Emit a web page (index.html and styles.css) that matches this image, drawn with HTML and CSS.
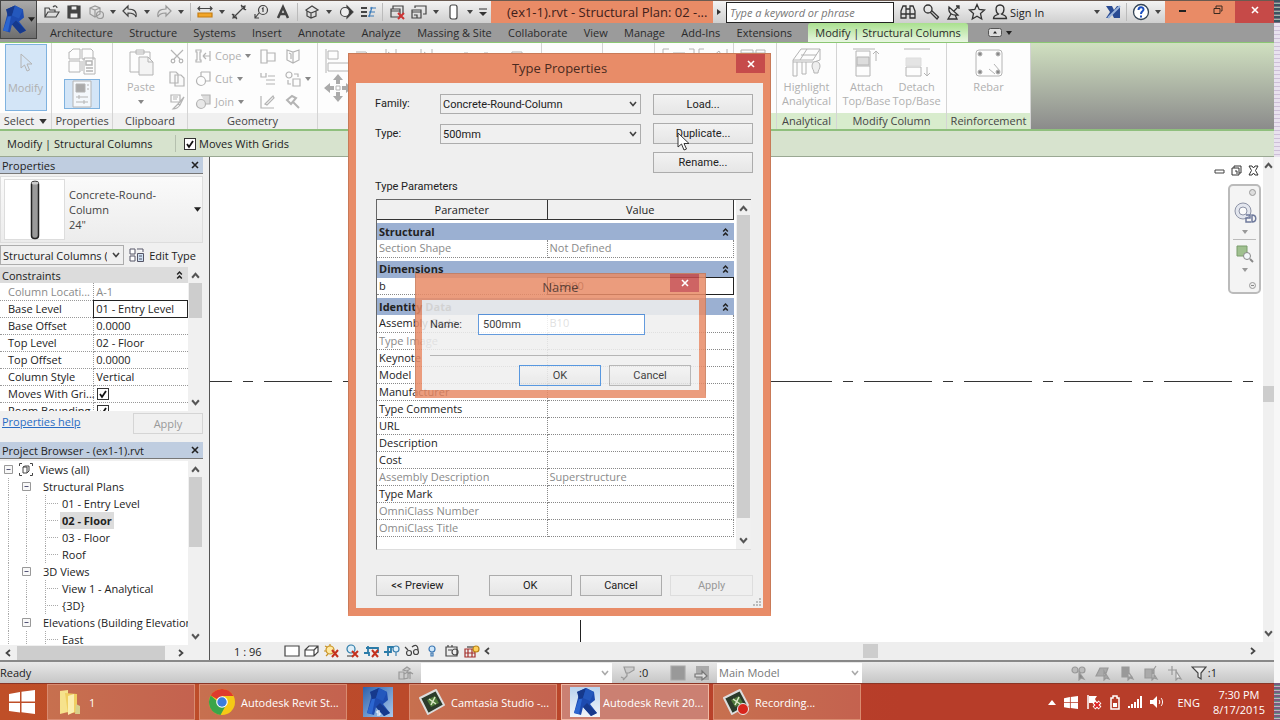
FILE: index.html
```html
<!DOCTYPE html>
<html lang="en">
<head>
<meta charset="utf-8">
<title>Autodesk Revit - (ex1-1).rvt</title>
<link rel="stylesheet" href="styles.css">
</head>
<body>
<svg class="defs" aria-hidden="true">
  <symbol id="caret" viewBox="0 0 6 4"><path d="M0 0h6L3 4z" fill="currentColor"/></symbol>
  <symbol id="up" viewBox="0 0 8 6"><path d="M1 5l3-3.500 3 3.500" fill="none" stroke="#555" stroke-width="1.800"/></symbol>
  <symbol id="down" viewBox="0 0 8 6"><path d="M1 1l3 3.500L7 1" fill="none" stroke="#555" stroke-width="1.800"/></symbol>
  <symbol id="left" viewBox="0 0 6 8"><path d="M5 1L1.500 4 5 7" fill="none" stroke="#444" stroke-width="1.700"/></symbol>
  <symbol id="right" viewBox="0 0 6 8"><path d="M1 1l3.500 3L1 7" fill="none" stroke="#444" stroke-width="1.700"/></symbol>
  <symbol id="cross" viewBox="0 0 8 8"><path d="M1 1l6 6M7 1L1 7" fill="none" stroke="currentColor" stroke-width="1.600"/></symbol>
  <symbol id="collapse" viewBox="0 0 6 8"><path d="M1 3.500l2-2 2 2M1 7l2-2 2 2" fill="none" stroke="#222" stroke-width="1.300"/></symbol>
  <symbol id="minusbox" viewBox="0 0 9 9"><path d="M.5.5h8v8h-8z" fill="#f8f8f8" stroke="#999"/><path d="M2.500 4.500h4" stroke="#557"/></symbol>
  <symbol id="revit" viewBox="0 0 30 30"><path d="M7 5l9-4 8 4 1 8-5 4 7 9-6 3-8-9-2 8-7-2 5-19z" fill="#1d4bb0"/><path d="M7 5l9-4-3 10-4 1zM13 20l4-4 10 10-6 3z" fill="#16398c"/><path d="M16 1l8 4-4 9-7-3z" fill="#2458bd"/><path d="M12 12l-3 15-5-1 5-14z" fill="#2c66d0"/></symbol>
  <symbol id="camtasia" viewBox="0 0 28 28"><path d="M2 10L18 2l8 15-16 9z" fill="#2b3a2a" stroke="#ddd" stroke-width="2" stroke-linejoin="round"/><path d="M9 12l8-4 4 7-8 4z" fill="#4f7a3a"/><path d="M11 11l7 5m-1-7l-4 8" stroke="#dce8c8" stroke-width="1.500"/></symbol>
  <symbol id="windows" viewBox="0 0 26 24"><path d="M0 4l11-2v9.500H0zM12.500 1.800L26 0v11.500H12.500zM0 13h11v9.500L0 21zM12.500 13H26v11l-13.500-1.800z" fill="#fff"/></symbol>
</svg>
<div class="screen">
<div class="app">

<header class="head">
  <button class="appbtn" aria-label="Application menu">
    <svg width="25" height="31" viewBox="3 0 25 30"><use href="#revit" width="30" height="30"/></svg>
    <svg width="7" height="5"><use href="#caret"/></svg>
  </button>
  <div class="titlebar">
    <nav class="qat" aria-label="Quick access">
      <button aria-label="Open"><svg class="i16" viewBox="0 0 16 16"><path d="M1 13V4h4l1 2h5v2M1 13l3-5h11l-3 5zM9 3c2-2 4-1 4 1" /></svg></button>
      <button aria-label="Save"><svg class="i16" viewBox="0 0 16 16"><path d="M2 2h12v12H2z" fill="#444"/><path d="M5 2h6v4H5zM4 9h8v5H4z" fill="#eee"/></svg></button>
      <button aria-label="Synchronize"><svg class="i16 dim" viewBox="0 0 16 16"><path d="M2 4l5-2 5 2v6l-5 3-5-3zM2 4l5 2 5-2M7 6v7"/><circle cx="12" cy="11" r="3.500"/></svg></button>
      <svg class="car"><use href="#caret"/></svg>
      <button aria-label="Undo"><svg class="i16" viewBox="0 0 16 16"><path d="M1 7l5-5v3c6 0 9 2 8 8-1-3-3-4-8-4v3z"/></svg></button>
      <svg class="car"><use href="#caret"/></svg>
      <button aria-label="Redo"><svg class="i16 dim" viewBox="0 0 16 16"><path d="M15 7l-5-5v3c-6 0-9 2-8 8 1-3 3-4 8-4v3z"/></svg></button>
      <svg class="car"><use href="#caret"/></svg>
      <span class="sep"></span>
      <button aria-label="Measure"><svg class="i16" viewBox="0 0 16 16"><path d="M1 4.500h14M3 2.500l-2 2 2 2M13 2.500l2 2-2 2"/><path d="M1 9h14v4H1z" fill="#f2a629" stroke="#c47c12"/></svg></button>
      <svg class="car"><use href="#caret"/></svg>
      <button aria-label="Aligned dimension"><svg class="i16" viewBox="0 0 16 16"><path d="M2 14L14 2M3 10l-1 4 4-1M10 3l4-1-1 4M1 10l5 5M10 1l5 5"/></svg></button>
      <button aria-label="Tag"><svg class="i16" viewBox="0 0 16 16"><circle cx="10" cy="6" r="4.500"/><path d="M6 9l-4 5M2 10v4h4M9 5l1-1v4"/></svg></button>
      <button aria-label="Text"><svg class="i16" viewBox="0 0 16 16"><path d="M3 14L8 3l5 11M5 10h6" stroke-width="2.500"/></svg></button>
      <span class="sep"></span>
      <button aria-label="3D view"><svg class="i16" viewBox="0 0 16 16"><path d="M2 6l6-4 6 4-2 1v5l-5 2-4-2V7zM3 7l4 2 5-2M7 9v5"/></svg></button>
      <svg class="car"><use href="#caret"/></svg>
      <button aria-label="Section"><svg class="i16" viewBox="0 0 16 16"><path d="M9 2l6 6-6 6z" fill="#333"/><circle cx="7" cy="8" r="4.500" fill="#eee"/></svg></button>
      <button aria-label="Thin lines"><svg class="i16" viewBox="0 0 16 16"><path d="M1 4h6M1 8h6M1 12h6" stroke-width="2.200"/><path d="M9 13l3-10M10 4h6M9 8h6M8 12h6" stroke="#3a7ab8"/></svg></button>
      <span class="sep"></span>
      <button aria-label="Close hidden windows"><svg class="i16" viewBox="0 0 16 16"><path d="M4 5V2h10v8M2 5h9v8H2zM2 7h9"/><path d="M9 9l6 6M15 9l-6 6" stroke="#c33" stroke-width="2"/></svg></button>
      <button aria-label="Switch windows"><svg class="i16" viewBox="0 0 16 16"><path d="M1 6h9v8H1zM1 8h9M4 4V2h11v8h-3M3 11h3v3"/></svg></button>
      <svg class="car"><use href="#caret"/></svg>
      <button aria-label="Column"><svg class="i16" viewBox="0 0 16 16"><rect x="5" y="1" width="7" height="14" rx="2" fill="#fff"/></svg></button>
      <svg class="car"><use href="#caret"/></svg>
      <button aria-label="Customize"><svg width="8" height="8" viewBox="0 0 8 8"><path d="M0 1h8" stroke="#333"/><path d="M0 4h8L4 8z" fill="#333"/></svg></button>
    </nav>
    <h1 class="doc">(ex1-1).rvt - Structural Plan: 02 -...</h1>
    <div class="info">
      <svg width="4" height="6" viewBox="0 0 4 6"><path d="M0 0l4 3-4 3z" fill="#333"/></svg>
      <input type="text" aria-label="Search" placeholder="Type a keyword or phrase">
      <button aria-label="Find"><svg class="i18" viewBox="0 0 18 18"><path d="M2 8l2-5h3v12H2zM16 8l-2-5h-3v12h5zM7 6h4v5H7M2 11h5M11 11h5"/></svg></button>
      <button aria-label="Subscription"><svg class="i18" viewBox="0 0 18 18"><circle cx="6" cy="6" r="4"/><path d="M8 9l7 7 1.500-2L9.500 7.500"/></svg></button>
      <button aria-label="Communication"><svg class="i18" viewBox="0 0 18 18"><path d="M4 4c-1 6 3 9 9 8zM9 8l5-5M11 3h3v3M6 11l-3 5h9l-2-4"/></svg></button>
      <button aria-label="Favorites"><svg class="i18" viewBox="0 0 18 18"><path d="M9 1.500l2.200 5 5.300.5-4 3.600 1.200 5.400L9 13.200 4.300 16l1.200-5.400-4-3.600 5.300-.5z"/></svg></button>
      <button class="sign"><svg class="i18" viewBox="0 0 18 18"><path d="M9 2c6 0 4 8 1.500 9 1 1 5 1 5 4.500h-13C2.500 12 6.500 12 7.500 11 5 10 3 2 9 2z"/></svg>Sign In</button>
      <svg class="car"><use href="#caret"/></svg>
      <button aria-label="Exchange"><svg width="16" height="14" viewBox="0 0 16 14"><path d="M1 1h6l2 4 3-4h3v12H9L7 9l-3 4H1l4-6z" fill="#2a4b93"/><path d="M15 1L3 13" stroke="#9bb5dd" stroke-width="2"/></svg></button>
      <span class="sep"></span>
      <button aria-label="Help"><svg class="i18" viewBox="0 0 18 18"><circle cx="9" cy="9" r="7.500" fill="#fff" stroke="#345"/><path d="M6.500 7c0-3.500 5-3.500 5-.5C11.500 8.500 9 8 9 11M9 12.500v2" stroke="#1c4fc0" stroke-width="2"/></svg></button>
      <svg class="car"><use href="#caret"/></svg>
    </div>
    <div class="winbtns">
      <button aria-label="Minimize"><svg width="9" height="9"><path d="M1 5h7" stroke="#222" stroke-width="2"/></svg></button>
      <button aria-label="Restore"><svg width="10" height="10"><path d="M1 3.500h6v5H1zM3 3V1h6v5H8" fill="none" stroke="#3a2a20"/></svg></button>
      <button class="close" aria-label="Close"><svg width="8" height="8"><use href="#cross"/></svg></button>
    </div>
  </div>
  <nav class="tabs">
    <div class="tablist"><button>Architecture</button><button>Structure</button><button>Systems</button><button>Insert</button><button>Annotate</button><button>Analyze</button><button>Massing &amp; Site</button><button>Collaborate</button><button>View</button><button>Manage</button><button>Add-Ins</button><button>Extensions</button><button class="on">Modify | Structural Columns</button></div>
    <button class="mini" aria-label="Ribbon display"><svg width="24" height="9" viewBox="0 0 24 9"><rect x=".5" y=".5" width="13" height="8" rx="2" fill="#ddd" stroke="#555"/><path d="M5 5.500L7 3l2 2.500zM18 3h6l-3 4z" fill="#222"/></svg></button>
  </nav>
</header>

<section class="ribbon" aria-label="Ribbon">
  <div class="panel w-select">
    <div class="tools"><button class="big hot"><svg width="14" height="20" viewBox="0 0 14 20"><path d="M2 1v14l3.500-3 2.500 6 2.500-1-2.500-6H13z"/></svg>Modify</button></div>
    <h2>Select <svg width="8" height="5"><use href="#caret"/></svg></h2>
  </div>
  <div class="panel w-props">
    <div class="tools stack">
      <button aria-label="Type properties"><svg width="28" height="28" viewBox="0 0 28 28"><path d="M2 4l3-3h7v10H1V4zM14 1h9l2 2v9M14 1v10h3M1 13h11v11H1zM14 13v10M16 10h11v16H16z"/><path d="M18 13h6v4h-6zM18 20h7M18 23h7" stroke-width="1.500"/></svg></button>
      <button class="hot" aria-label="Properties"><svg width="34" height="30" viewBox="0 0 34 30"><path d="M8 2h18v26H8z" fill="#f4f8fc"/><path d="M11 5h9v8h-9z" fill="#aaa"/><path d="M22 6h2M22 10h2M11 18h12M14 16v4M11 23h12M19 21v4"/></svg></button>
    </div>
    <h2>Properties</h2>
  </div>
  <div class="panel w-clip">
    <div class="tools">
      <button class="big"><svg width="26" height="28" viewBox="0 0 26 28"><path d="M2 4h20v8M2 4v20h9M8 2h8v4H8z"/><path d="M11 9h9l5 5v13H11z" fill="#f4f4f4"/><path d="M20 9v5h5"/></svg>Paste<svg class="car"><use href="#caret"/></svg></button>
      <div class="stack">
        <button aria-label="Cut"><svg class="i16" viewBox="0 0 16 16"><path d="M2 2l9 9M14 2L5 11"/><circle cx="4" cy="13" r="1.800"/><circle cx="12" cy="13" r="1.800"/></svg></button>
        <button aria-label="Copy"><svg class="i16" viewBox="0 0 16 16"><path d="M1 1h6l2 2v9H1zM6 4h6l3 3v8H6z" fill="#fafafa"/></svg></button>
        <button aria-label="Match"><svg class="i16" viewBox="0 0 16 16"><path d="M2 1h9v7H2zM4 3h5M4 5h4M15 3l-6 7 2 1zM9 10l-5 5c3 0 5-1 7-4z"/></svg></button>
      </div>
    </div>
    <h2>Clipboard</h2>
  </div>
  <div class="panel w-geo">
    <div class="tools cols">
      <div class="stack">
        <button><svg class="i16" viewBox="0 0 16 16"><path d="M1 2h5v2H5v8h1v2H1v-2h1V4H1zM8 8h7M8 8l3-3M8 8l3 3M15 3v10"/></svg>Cope<svg class="car"><use href="#caret"/></svg></button>
        <button><svg class="i16" viewBox="0 0 16 16"><path d="M6 1h9v9h-4M6 1v4"/><circle cx="6" cy="10" r="4.500"/></svg>Cut<svg class="car"><use href="#caret"/></svg></button>
        <button><svg class="i16" viewBox="0 0 16 16"><path d="M6 1h9v9h-4" fill="#ddd"/><circle cx="6" cy="10" r="4.500" fill="#e8e8e8"/></svg>Join<svg class="car"><use href="#caret"/></svg></button>
      </div>
      <div class="stack">
        <button aria-label="Wall joins"><svg class="i16" viewBox="0 0 16 16"><path d="M1 2h6v3h8v8H7v2H1zM7 5v8"/></svg></button>
        <button aria-label="Split"><svg class="i16" viewBox="0 0 16 16"><path d="M1 2v4h5V2M6 9h9M6 13h9M8 5h7"/></svg></button>
        <button aria-label="Paint"><svg class="i16" viewBox="0 0 16 16"><path d="M1 2v12h13M5 10l8-8 1 2-7 7z"/></svg></button>
      </div>
      <div class="stack">
        <button aria-label="Beam joins"><svg class="i16" viewBox="0 0 16 16"><path d="M2 2l6 2 6-2v10l-6 3-6-3zM8 4v11M4 5l2 1v5"/></svg></button>
        <button aria-label="Unjoin"><svg class="i16" viewBox="0 0 16 16"><circle cx="4" cy="4" r="3"/><path d="M8 8h7v7H8zM9 3h4v3M3 9v4h3"/></svg><svg class="car"><use href="#caret"/></svg></button>
        <button aria-label="Demolish"><svg class="i16" viewBox="0 0 16 16"><path d="M2 6l5-4 4 2-5 6zM8 8l6 6" stroke-width="2"/></svg></button>
      </div>
    </div>
    <h2>Geometry</h2>
  </div>
  <div class="panel w-mod">
    <div class="tools top">
      <div class="stack"><svg width="26" height="26" viewBox="0 0 26 26"><path d="M2 1v24M4 3h10v8H4zM4 15h22v8H4z"/></svg>
      <svg width="28" height="28" viewBox="0 0 28 28"><path d="M14 0l5 6h-3v4h-4V6H9zM14 28l5-6h-3v-4h-4v4H9zM0 14l6-5v3h4v4H6v3zM28 14l-6-5v3h-4v4h4v3z" fill="#aaa" stroke="none"/><path d="M12 12h4v4h-4z"/></svg></div>
      <svg width="170" height="20" viewBox="0 0 170 20"><path d="M2 4h10l3 4M32 8V1M34 4l5 4h3V1M67 8V1M70 4l5 4h3V1M110 5h4M130 5h4M158 4h10v8h-12z"/></svg>
    </div><h2>Modify</h2>
  </div>
  <div class="panel w-view"><div class="tools"></div><h2>View</h2></div>
  <div class="panel w-meas"><div class="tools"></div><h2>Measure</h2></div>
  <div class="panel w-create"><div class="tools top"><svg width="70" height="20" viewBox="0 0 70 20"><path d="M8 1H2v14M12 5h12v8M28 1h5v12M38 1v12M38 1h5M50 10l8-7 4 7M66 1v12"/></svg></div><h2>Create</h2></div>
  <div class="panel ctx w-mode"><div class="tools top"><svg width="26" height="20" viewBox="0 0 26 20"><path d="M1 2h12v10H1zM16 2h9v10h-9zM1 5h24"/></svg></div><h2>Mode</h2></div>
  <div class="panel ctx w-ana">
    <div class="tools"><button class="big"><svg width="30" height="30" viewBox="0 0 30 30"><path d="M1 12L9 1h19v11L22 14H1zM1 12h20L28 1M8 12l7-11M1 14v14h4V14M10 14v12h4V14M9 7h15"/><path d="M20 18c0-6 8-6 8 0 0 3-2 4-2 7h-4c0-3-2-4-2-7z" fill="#eee"/></svg><span>Highlight<br>Analytical</span></button></div><h2>Analytical</h2>
  </div>
  <div class="panel ctx w-modcol">
    <div class="tools">
      <button class="big"><svg width="30" height="30" viewBox="0 0 30 30"><path d="M2 1h22M5 3h14v25H5zM5 18h14" /><path d="M6 9h12v8H6z" fill="#ddd"/><path d="M25 3v10M22 6l3-3 3 3"/></svg><span>Attach<br>Top/Base</span></button>
      <button class="big"><svg width="30" height="30" viewBox="0 0 30 30"><path d="M2 1h26M4 19h15v9H4z"/><path d="M4 10h15v8H4z" fill="#e4e4e4" stroke="#ddd"/><path d="M25 19v9M22 25l3 3 3-3"/></svg><span>Detach<br>Top/Base</span></button>
    </div><h2>Modify Column</h2>
  </div>
  <div class="panel ctx w-reb">
    <div class="tools"><button class="big"><svg width="30" height="30" viewBox="0 0 30 30"><rect x="2" y="2" width="26" height="26" rx="3"/><g fill="#888"><circle cx="6" cy="6" r="2"/><circle cx="24" cy="6" r="2"/><circle cx="6" cy="24" r="2"/><circle cx="24" cy="24" r="2"/></g><path d="M20 16l6 7M15 21l6 5"/></svg>Rebar</button></div><h2>Reinforcement</h2>
  </div>
</section>

<div class="options">
  <span class="ctxname">Modify | Structural Columns</span>
  <label><input type="checkbox" checked>Moves With Grids</label>
</div>

<main class="work">
  <aside class="dock">
    <section class="props">
      <h2 class="dockhead">Properties<button aria-label="Close properties"><svg width="8" height="8"><use href="#cross"/></svg></button></h2>
      <button class="typesel">
        <span class="thumb"><svg width="10" height="60" viewBox="0 0 10 60"><rect x="1.500" y="1.500" width="7" height="57" rx="3" fill="#999" stroke="#222" stroke-width="1.500"/><ellipse cx="5" cy="3" rx="3.500" ry="1.500" fill="#ccc"/></svg></span>
        <span class="tname">Concrete-Round-<br>Column<br>24"</span>
        <svg width="7" height="5"><use href="#caret"/></svg>
      </button>
      <div class="filter">
        <select aria-label="Category"><option>Structural Columns (1)</option></select>
        <button><svg width="16" height="16" viewBox="0 0 16 16" fill="none" stroke="#556"><path d="M1 2h5v5H1zM8 2h6v3M1 9h5v5H1z" fill="#fff"/><path d="M8.500 6.500h6v8h-6z" fill="#cfe0f2"/><path d="M10 9h3M10 12h3"/></svg>Edit Type</button>
      </div>
      <div class="scrollarea">
        <div class="grid">
          <div class="ghead">Constraints<svg width="7" height="10"><use href="#collapse"/></svg></div>
          <table class="ptable">
            <tr class="off"><th>Column Locati...</th><td>A-1</td></tr>
            <tr class="cur"><th>Base Level</th><td>01 - Entry Level</td></tr>
            <tr><th>Base Offset</th><td>0.0000</td></tr>
            <tr><th>Top Level</th><td>02 - Floor</td></tr>
            <tr><th>Top Offset</th><td>0.0000</td></tr>
            <tr><th>Column Style</th><td>Vertical</td></tr>
            <tr><th>Moves With Gri...</th><td><input type="checkbox" aria-label="Moves With Grids" checked></td></tr>
            <tr><th>Room Bounding</th><td><input type="checkbox" aria-label="Room Bounding" checked></td></tr>
          </table>
        </div>
        <div class="vbar"><svg width="9" height="7"><use href="#up"/></svg><i class="t35"></i><svg width="9" height="7"><use href="#down"/></svg></div>
      </div>
      <div class="foot"><a href="#help">Properties help</a><button disabled>Apply</button></div>
    </section>
    <section class="browser">
      <h2 class="dockhead">Project Browser - (ex1-1).rvt<button aria-label="Close browser"><svg width="8" height="8"><use href="#cross"/></svg></button></h2>
      <div class="scrollarea">
        <ul class="tree">
          <li class="l0"><svg width="9" height="9"><use href="#minusbox"/></svg><svg width="14" height="13" viewBox="0 0 14 13" fill="none" stroke="#444"><path d="M3 .5H.5V3M11 .5h2.500V3M3 12.500H.5V10M11 12.500h2.500V10M4 4l2-1h4v5L8 10H4zM4 4h4v6"/></svg>Views (all)</li>
          <li class="l1"><svg width="9" height="9"><use href="#minusbox"/></svg>Structural Plans</li>
          <li class="l2">01 - Entry Level</li>
          <li class="l2"><b>02 - Floor</b></li>
          <li class="l2">03 - Floor</li>
          <li class="l2">Roof</li>
          <li class="l1"><svg width="9" height="9"><use href="#minusbox"/></svg>3D Views</li>
          <li class="l2">View 1 - Analytical</li>
          <li class="l2">{3D}</li>
          <li class="l1"><svg width="9" height="9"><use href="#minusbox"/></svg>Elevations (Building Elevation</li>
          <li class="l2">East</li>
        </ul>
        <div class="vbar"><svg width="9" height="7"><use href="#up"/></svg><i class="t70"></i><svg width="9" height="7"><use href="#down"/></svg></div>
      </div>
      <div class="hbar"><svg width="6" height="8"><use href="#left"/></svg><i></i><svg width="6" height="8"><use href="#right"/></svg></div>
    </section>
  </aside>
  <section class="view">
    <div class="canvasrow">
      <div class="canvas">
        <svg class="drawing" aria-label="Plan grid lines"><path d="M0 224.500H1060" stroke="#333" stroke-dasharray="68 11 10 11" stroke-dashoffset="46"/><path d="M370.500 463V485" stroke="#222"/></svg>
        <div class="mdi">
          <svg width="11" height="10"><path d="M1 5h9v3H1z" fill="#fff" stroke="#444"/></svg>
          <svg width="11" height="11" fill="none" stroke="#333"><path d="M3 3V1h7v7H8M1 3h7v7H1zM4 6h2v3"/></svg>
          <svg width="11" height="11"><path d="M1 1h3l1.500 2L7 1h3L7.500 5.500 10 10H7L5.500 8 4 10H1l2.500-4.500z" fill="#fff" stroke="#333"/></svg>
        </div>
        <div class="navbar">
          <svg width="7" height="7"><circle cx="3.500" cy="3.500" r="3" fill="#ddd" stroke="#999"/></svg>
          <svg width="24" height="24" viewBox="0 0 24 24"><circle cx="10" cy="10" r="8" fill="#e3e6ee" stroke="#8d93a6"/><circle cx="10" cy="10" r="4" fill="#fafafa" stroke="#8d93a6"/><path d="M13 14h4v3h-4v4h5M19 14v7c5 0 5-7 0-7z" fill="none" stroke="#6f7a9c" stroke-width="1.500"/></svg>
          <svg class="car"><use href="#caret"/></svg>
          <hr>
          <svg width="18" height="18" viewBox="0 0 18 18"><path d="M1 1h10v10H1z" fill="#9fc08f" stroke="#7b9c6c"/><circle cx="11" cy="11" r="3.500" fill="#f3f7fa" stroke="#888"/><path d="M14 14l3 3" stroke="#888" stroke-width="2"/></svg>
          <svg class="car"><use href="#caret"/></svg>
          <svg class="end" width="7" height="7"><circle cx="3.500" cy="3.500" r="3" fill="#eee" stroke="#999"/><path d="M2 3.500h3" stroke="#888"/></svg>
        </div>
      </div>
      <div class="vbar tall"><svg width="9" height="7"><use href="#up"/></svg><i></i><svg width="9" height="7"><use href="#down"/></svg></div>
    </div>
    <div class="viewbar">
      <span class="scale">1 : 96</span>
      <svg class="i16" viewBox="0 0 16 16"><path d="M1 3h14v10H1z" fill="#fff"/></svg>
      <svg class="i16" viewBox="0 0 16 16"><path d="M1 7l4-4h9v6l-4 4H1zM1 7h9v6M10 7l4-4" fill="#fff"/></svg>
      <svg class="i16" viewBox="0 0 16 16"><circle cx="6" cy="7" r="4" fill="#ffe9a0" stroke="#c89224"/><path d="M6 1v2M1 3l2 1M0 8h2M2 13l2-2" stroke="#c89224"/><path d="M8 7l6 7M14 7l-6 7" stroke="#c4301c" stroke-width="2"/></svg>
      <svg class="i16" viewBox="0 0 16 16"><circle cx="7" cy="6" r="4" fill="#dfeef8" stroke="#2b7ba8"/><path d="M3 13h6" stroke="#555"/><path d="M8 8l6 6M14 8l-6 6" stroke="#c4301c" stroke-width="2"/></svg>
      <svg class="i16" viewBox="0 0 16 16"><path d="M4 3v7H0M2 5h12v5M5 13V9" stroke="#2b7ba8" stroke-width="1.800"/><path d="M8 7l6 7M14 7l-6 7" stroke="#c4301c" stroke-width="2"/></svg>
      <svg class="i16" viewBox="0 0 16 16"><path d="M4 13V4h6M0 9h7V5" stroke="#2b7ba8" stroke-width="1.800"/><circle cx="12" cy="6" r="3" fill="#dff1fb" stroke="#3e82b0"/><path d="M12 9v4" stroke="#3e82b0"/></svg>
      <svg class="i16" viewBox="0 0 16 16"><circle cx="5" cy="10" r="2.500"/><circle cx="12" cy="9" r="2.500"/><path d="M1 4l3 3M8 4c3-3 6-2 6 3"/></svg>
      <svg class="i16" viewBox="0 0 16 16"><circle cx="8" cy="6" r="3" fill="#cfe7fa" stroke="#3c78b4"/><path d="M7 10h2v3H7z" stroke="#3c78b4"/></svg>
      <svg class="i16" viewBox="0 0 16 16"><path d="M2 4h11v9H2zM4 2v2M8 2v2M4 7h4" /><circle cx="11" cy="9" r="3"/></svg>
      <svg class="i16" viewBox="0 0 16 16"><path d="M1 6h10v8H1zM1 10h10M4 6v8M8 6v8" stroke="#a3302c"/><path d="M3 4h9"/><circle cx="12" cy="6" r="3" fill="#ffd15a" stroke="#bb8418"/></svg>
      <svg class="lt" width="6" height="8"><use href="#left"/></svg>
      <i></i>
      <svg class="gt" width="6" height="8"><use href="#right"/></svg>
    </div>
  </section>
</main>

<footer class="status">
  <span class="ready">Ready</span>
  <svg class="i16" viewBox="0 0 16 16"><path d="M1 7h5v7H1zM6 9l4-2v6l-4 1M5 5l4-3 3 2-3 2zM12 14V7M10 9l2-2 3 2" fill="#ccc"/></svg>
  <select class="wset" aria-label="Workset"><option></option></select>
  <span class="cnt"><svg class="i16" viewBox="0 0 16 16"><path d="M4 2h10v3L9 8H6zM7 8v3l-4 4M1 12l4 2" fill="#ccc"/></svg>:0</span>
  <svg class="sq i16" viewBox="0 0 16 16"><path d="M1 1h14v14H1z" fill="#999" stroke="#aaa"/></svg>
  <svg class="i16" viewBox="0 0 16 16"><path d="M2 1h13v14H2z" fill="#aaa" stroke="none"/><path d="M1 9h7V6l5 5-5 4v-3H1z" fill="#ddd" stroke="#777"/></svg>
  <select class="model" aria-label="Design option"><option>Main Model</option></select>
  <span class="sel">
    <svg class="i16" viewBox="0 0 16 16"><circle cx="4" cy="5" r="3" fill="#bbb"/><circle cx="11" cy="5" r="3" fill="#bbb"/><path d="M8 7v8l2-2 3 1z" fill="#888"/></svg>
    <svg class="i16" viewBox="0 0 16 16"><path d="M1 11l4-8h8l-3 8zM9 6v9l2-2 3 1z" fill="#aaa"/></svg>
    <svg class="i16" viewBox="0 0 16 16"><path d="M3 2h7v6l3 4H3zM9 6v9l2-2 3 1z" fill="#999"/></svg>
    <svg class="i16" viewBox="0 0 16 16"><path d="M2 4h9v9H2zM13 1l-4 6M9 6v9l2-2 3 1z" fill="#aaa"/></svg>
    <svg class="i16" viewBox="0 0 16 16"><path d="M5 1v9M1 5h9M9 6v9l2-2 3 1z" fill="#eee"/></svg>
    <svg class="i16 dark" viewBox="0 0 16 16"><path d="M1 2h14l-5 6v6l-3-2V8z" fill="#eee"/></svg>:1
  </span>
</footer>

<nav class="taskbar" aria-label="Taskbar">
  <button class="start" aria-label="Start"><svg width="26" height="24"><use href="#windows"/></svg></button>
  <button class="task"><svg width="28" height="28" viewBox="0 0 28 28"><path d="M4 3l8-1v22l-8 2z" fill="#f6e28c"/><path d="M9 5l12 1v18l-9 2z" fill="#f0cf62"/><path d="M12 8l6-2v18l-6 3z" fill="#fbeeb0"/><path d="M20 16l4 2v8h-5z" fill="#d8cf8a"/></svg>1</button>
  <button class="task"><svg width="28" height="28" viewBox="0 0 28 28"><circle cx="14" cy="14" r="13" fill="#f5c916"/><path d="M14 14L2.700 7.500A13 13 0 0 1 25.500 8H14z" fill="#df3a2d"/><path d="M14 14l-5 -1L2.700 7.500A13 13 0 0 0 12.500 27l5-9z" fill="#3ba54a"/><circle cx="14" cy="14" r="5.800" fill="#fff"/><circle cx="14" cy="14" r="4.700" fill="#3b7ddb"/></svg>Autodesk Revit St...</button>
  <button class="pin" aria-label="Revit Structure"><svg width="30" height="30" viewBox="0 0 30 30"><use href="#revit"/><path d="M17 24h-3v2h3v2h-3" fill="none" stroke="#fff"/></svg></button>
  <button class="task"><svg width="28" height="28"><use href="#camtasia"/></svg>Camtasia Studio -...</button>
  <button class="task now"><svg class="rv" width="30" height="30"><use href="#revit"/></svg>Autodesk Revit 20...</button>
  <button class="task"><svg width="28" height="28" viewBox="0 0 28 28"><use href="#camtasia"/><circle cx="21" cy="21" r="5.500" fill="#d8261c" stroke="#eee"/></svg>Recording...</button>
  <div class="tray">
    <svg width="8" height="5" viewBox="0 0 8 5"><path d="M0 5l4-5 4 5z" fill="#fff"/></svg>
    <svg width="14" height="13" viewBox="0 0 26 24"><use href="#windows"/></svg>
    <svg width="16" height="16" viewBox="0 0 16 16"><path d="M2 1v14" stroke="#fff" stroke-width="1.500"/><path d="M3 2h8l-2 3 2 4H3z" fill="#fff"/><path d="M8 8l6 6M14 8l-6 6" stroke="#fff" stroke-width="4"/><path d="M8.500 8.500l5 5M13.500 8.500l-5 5" stroke="#d22" stroke-width="2"/></svg>
    <svg width="10" height="15" viewBox="0 0 10 15"><path d="M3 1h4v2h2v11H1V3h2z" fill="none" stroke="#fff" stroke-width="1.500"/><path d="M3 8h4v4H3z" fill="#fff"/></svg>
    <svg width="14" height="12" viewBox="0 0 14 12"><path d="M0 12h2v-2H0zM3 12h2V8H3zM6 12h2V6H6zM9 12h2V3H9zM12 12h2V0h-2z" fill="#fff"/></svg>
    <svg width="14" height="14" viewBox="0 0 14 14"><path d="M0 5h3l4-4v12L3 9H0z" fill="#fff"/><path d="M9 5c1 1 1 3 0 4M11 3c2 2 2 6 0 8" fill="none" stroke="#fff"/></svg>
    <span class="lang">ENG</span>
    <time>7:30 PM<br>8/17/2015</time>
  </div>
</nav>
</div>
<div class="edge"><i class="s1"></i><i class="s2"></i><i class="s3"></i><i class="s4"></i></div>
</div>

<section class="dialog" role="dialog" aria-labelledby="tp">
  <h2 class="dtitle" id="tp">Type Properties</h2>
  <button class="dclose" aria-label="Close"><svg width="8" height="8"><use href="#cross"/></svg></button>
  <div class="dbody">
    <div class="form">
      <div class="fields">
        <label for="fam">Family:</label><select id="fam"><option>Concrete-Round-Column</option></select>
        <label for="typ">Type:</label><select id="typ"><option>500mm</option></select>
      </div>
      <div class="side"><button>Load...</button><button>Duplicate...</button><button>Rename...</button></div>
    </div>
    <h3>Type Parameters</h3>
    <div class="params">
      <table>
        <thead><tr><th>Parameter</th><th>Value</th></tr></thead>
        <tbody><tr class="grp"><td colspan="2">Structural<svg width="7" height="10"><use href="#collapse"/></svg></td></tr>
        <tr class="off"><td>Section Shape</td><td>Not Defined</td></tr></tbody>
        <tbody><tr class="grp"><td colspan="2">Dimensions<svg width="7" height="10"><use href="#collapse"/></svg></td></tr>
        <tr class="cur"><td>b</td><td>0.5000</td></tr></tbody>
        <tbody><tr class="grp"><td colspan="2">Identity Data<svg width="7" height="10"><use href="#collapse"/></svg></td></tr>
        <tr><td>Assembly Code</td><td>B10</td></tr>
        <tr class="off"><td>Type Image</td><td></td></tr>
        <tr><td>Keynote</td><td></td></tr>
        <tr><td>Model</td><td></td></tr>
        <tr><td>Manufacturer</td><td></td></tr>
        <tr><td>Type Comments</td><td></td></tr>
        <tr><td>URL</td><td></td></tr>
        <tr><td>Description</td><td></td></tr>
        <tr><td>Cost</td><td></td></tr>
        <tr class="off"><td>Assembly Description</td><td>Superstructure</td></tr>
        <tr><td>Type Mark</td><td></td></tr>
        <tr class="off"><td>OmniClass Number</td><td></td></tr>
        <tr class="off"><td>OmniClass Title</td><td></td></tr></tbody>
      </table>
      <div class="vbar"><svg width="9" height="7"><use href="#up"/></svg><i></i><svg width="9" height="7"><use href="#down"/></svg></div>
    </div>
    <div class="actions"><button>&lt;&lt; Preview</button><button class="ok">OK</button><button>Cancel</button><button disabled>Apply</button></div>
    <svg class="grip" width="9" height="9"><path d="M6 0h2v2H6zM3 3h2v2H3zM6 3h2v2H6zM0 6h2v2H0zM3 6h2v2H3zM6 6h2v2H6z" fill="#bbb"/></svg>
  </div>
</section>

<section class="dialog name" role="dialog" aria-labelledby="nm">
  <h2 class="dtitle" id="nm">Name</h2>
  <button class="dclose" aria-label="Close"><svg width="8" height="8"><use href="#cross"/></svg></button>
  <div class="dbody">
    <div class="nrow"><label for="nin">Name:</label><input id="nin" type="text" value="500mm"></div>
    <div class="nact"><button class="def">OK</button><button>Cancel</button></div>
  </div>
</section>

<svg class="pointer" width="13" height="19" viewBox="0 0 13 19"><path d="M1 1v14l3.500-3 2.500 6 2.500-1L7 11.500h5z" fill="#fff" stroke="#333"/></svg>
</body>
</html>
```
FILE: styles.css
```css
* { box-sizing: border-box; }
body { margin: 0; font: 11px/17px "Open Sans", "Noto Sans", sans-serif; color: #222; background: #f0f0f0; }
button, input, select { font: inherit; color: inherit; margin: 0; }
button { padding: 0; border: 0; background: none; }
h1, h2, h3, ul { margin: 0; padding: 0; font-size: inherit; font-weight: normal; }
svg { flex: none; display: block; }
.defs { position: absolute; width: 0; height: 0; }
.i16 { width: 16px; height: 16px; fill: none; stroke: #444; stroke-width: 1.2; }
.i18 { width: 18px; height: 18px; fill: none; stroke: #333; stroke-width: 1.3; }
.dim { stroke: #999; }
.car { width: 6px; height: 4px; color: #444; }
.screen { display: flex; min-height: 100vh; }
.app { flex: 1; min-width: 0; display: flex; flex-direction: column; }
.edge { width: 6px; display: flex; flex-direction: column; }
.s1 { height: 23px; background: repeating-linear-gradient(#3a5560 0 2px, #7a6a80 2px 3px, #9fb5a8 3px 4px); }
.s2 { height: 134px; background: repeating-linear-gradient(#e9e2ef 0 3px, #cdbfd8 3px 4px); }
.s3 { flex: 1; background: #f7f7f7; }
.s4 { height: 37px; background: repeating-linear-gradient(#7a5a80 0 2px, #5f8f80 2px 3px, #c5b0c0 3px 4px); }

.head { display: grid; grid-template-columns: 37px 1fr; grid-template-rows: 23px 19px; background: #9b9b9b; }
.appbtn { grid-row: 1 / 3; height: 39px; display: flex; align-items: center; justify-content: center; gap: 1px; background: linear-gradient(#aaa, #6e6e6e); border: 1px solid #444; }
.titlebar { display: flex; min-width: 0; background: #e98b66; border-top: 1px solid #6b5a50; }
.qat, .info { display: flex; align-items: center; background: linear-gradient(#f3f3f3, #cfcfcf); }
.qat { gap: 6px; padding: 0 4px 0 7px; }
.sep { width: 1px; height: 18px; background: #bbb; }
.doc { flex: 1; min-width: 0; padding: 0 0 0 16px; font-size: 13px; line-height: 22px; white-space: nowrap; overflow: hidden; color: #40201a; }
.info { gap: 5px; width: 452px; padding: 0 4px; }
.info input { width: 168px; height: 21px; padding: 0 3px; border: 1px solid #222; background: #fff; font-style: italic; }
.info input::placeholder { color: #777; opacity: 1; }
.sign { display: flex; align-items: center; gap: 1px; margin-right: auto; }
.winbtns { display: flex; width: 109px; }
.winbtns button { flex: 1; display: grid; place-items: center; padding-bottom: 4px; }
.winbtns .close { background: #c64a48; color: #fff; flex: 0 0 39px; }
.tabs { display: flex; align-items: stretch; padding-left: 13px; white-space: nowrap; }
.tablist { display: flex; justify-content: space-between; flex: 0 1 918px; }
.tabs button { color: #2b2b2b; }
.tabs .on { padding: 0 7px; background: linear-gradient(#a9e08e, #e9f6e2); border-radius: 3px 3px 0 0; }
.tabs .mini { padding: 0 20px; }

.ribbon { display: flex; height: 89px; border-top: 1px solid #8bc773; border-bottom: 2px solid #8fbf7d; background: linear-gradient(#d0e0c0, #8b8b8b); }
.panel { display: flex; flex-direction: column; background: #fdfdfd; border-right: 1px solid #d4d4d4; color: #b0b0b0; }
.panel svg { fill: none; stroke: #b4b4b4; }
.panel .car, .panel h2 svg { stroke: none; fill: currentColor; color: #888; }
.panel h2 { height: 16px; line-height: 16px; text-align: center; background: #f0f0f0; color: #444; white-space: nowrap; display: flex; justify-content: center; align-items: center; gap: 5px; }
.panel h2 svg { color: #333; }
.panel.ctx h2 { background: #d8eccd; }
.tools { flex: 1; display: flex; justify-content: center; align-items: flex-start; padding-top: 1px; gap: 2px; }
.tools.top { justify-content: flex-start; padding: 5px 6px; overflow: hidden; height: 70px; flex: none; }
.big { display: flex; flex-direction: column; align-items: center; padding-top: 4px; line-height: 14px; color: #b0b0b0; text-align: center; }
.big > svg:first-child { margin-bottom: 2px; }
.w-clip .big > svg:first-child { margin-bottom: 4px; }
.big .car { margin-top: 6px; }
.hot { background: #d3e5f7; border: 1px solid #7fb2df; }
.w-select .hot { width: 42px; height: 67px; padding-top: 8px; }
.w-select .hot > svg { margin-bottom: 8px; }
.w-select .hot { justify-content: flex-start; }
.stack { display: flex; flex-direction: column; }
.stack button { display: flex; align-items: center; gap: 4px; height: 23px; color: #b0b0b0; }
.w-props .stack { align-items: center; gap: 2px; justify-content: flex-start; padding-top: 4px; }
.w-props .stack button { height: 30px; }
.cols { justify-content: flex-start; padding-left: 7px; gap: 9px; }
.w-clip .tools { gap: 14px; padding-left: 12px; }
.w-select { width: 52px; } .w-props { width: 61px; } .w-clip { width: 75px; } .w-geo { width: 130px; }
.w-mod { width: 224px; } .w-view { width: 61px; } .w-meas { width: 52px; } .w-create { width: 79px; } .w-mode { width: 43px; }
.w-ana { width: 60px; } .w-modcol { width: 110px; } .w-reb { width: 84px; }

.options { display: flex; align-items: center; height: 26px; background: #d7e3ce; border-bottom: 1px solid #9aa893; }
.ctxname { width: 176px; padding-left: 7px; border-right: 1px solid #b5c0ae; }
.options label { display: flex; align-items: center; gap: 3px; padding-left: 8px; }
input[type=checkbox] { appearance: none; width: 12px; height: 12px; border: 1px solid #333; background: #fff url("data:image/svg+xml,%3Csvg xmlns='http://www.w3.org/2000/svg' viewBox='0 0 10 10'%3E%3Cpath d='M2 5l2 3 4-6' fill='none' stroke='%23111' stroke-width='1.800'/%3E%3C/svg%3E"); }
select { appearance: none; border: 1px solid #adadad; border-radius: 0; padding: 0 16px 0 2px; background: #f0f0f0 url("data:image/svg+xml,%3Csvg xmlns='http://www.w3.org/2000/svg' width='8' height='6'%3E%3Cpath d='M1 1l3 3.500L7 1' fill='none' stroke='%23444' stroke-width='1.600'/%3E%3C/svg%3E") no-repeat right 3px center; }

.work { flex: 1; display: flex; min-height: 0; }
.dock { width: 203px; display: flex; flex-direction: column; }
.dockhead { display: flex; justify-content: space-between; align-items: center; height: 17px; padding: 0 4px 0 2px; background: #bfcde0; border-bottom: 1px solid #777; margin-bottom: 2px; }
.dockhead button { color: #222; }
.typesel { display: flex; align-items: center; width: 100%; height: 67px; padding: 0 3px; border: 1px solid #ddd; background: linear-gradient(#fafafa, #ececec); text-align: left; line-height: 15px; }
.thumb { width: 61px; height: 61px; display: grid; place-items: center; background: #fff; border: 1px solid #ddd; }
.tname { flex: 1; padding-left: 4px; color: #444; }
.typesel > svg { margin-right: -2px; }
.filter { display: flex; align-items: center; justify-content: space-between; height: 24px; }
.filter select { width: 124px; height: 20px; }
.filter button { display: flex; align-items: center; gap: 4px; padding-right: 7px; }
.scrollarea { display: flex; overflow: hidden; }
.props .scrollarea { height: 144px; }
.grid { flex: 1; min-width: 0; background: #fff; }
.ghead { display: flex; justify-content: space-between; align-items: center; height: 16px; padding: 0 5px 0 2px; background: #dcdcdc; }
.ptable { width: 100%; border-collapse: collapse; table-layout: fixed; }
.ptable th, .ptable td { height: 17px; padding: 0 0 0 2px; line-height: 15px; font-weight: normal; text-align: left; border-bottom: 1px dotted #999; white-space: nowrap; }
.ptable th { padding-left: 8px; border-right: 1px dotted #999; }
.ptable input { display: block; margin: 2px 1px; }
.off { color: #8a8a8a; }
.ptable .cur td { border: 1px solid #222; }
.vbar { display: flex; flex-direction: column; align-items: center; width: 15px; padding: 5px 0; background: #f0f0f0; }
.vbar i { width: 13px; background: #cdcdcd; margin: 4px 0 auto; }
.t35 { height: 35px; } .t70 { height: 70px; }
.foot { display: flex; justify-content: space-between; height: 23px; padding-left: 2px; line-height: 22px; }
.foot a { color: #2a6cc4; }
.foot button { width: 70px; border: 1px solid #d5d5d5; color: #999; margin-top: 2px; line-height: 18px; }
.browser { flex: 1; display: flex; flex-direction: column; margin-top: 8px; min-height: 0; }
.browser .scrollarea { flex: 1 1 0; min-height: 0; }
.tree { flex: 1; min-width: 0; list-style: none; background: #fff; overflow: hidden; }
.tree li { display: flex; align-items: center; height: 17px; white-space: nowrap; }
.tree li + li { background: repeating-linear-gradient(#aaa 0 1px, transparent 1px 2px) 8px 0 / 1px 100% no-repeat; }
.tree .l0 { padding-left: 4px; gap: 6px; }
.tree .l1 { padding-left: 22px; gap: 12px; }
.tree li.l2 { padding-left: 60px; background: repeating-linear-gradient(#aaa 0 1px, transparent 1px 2px) 8px 0 / 1px 100% no-repeat, repeating-linear-gradient(#aaa 0 1px, transparent 1px 2px) 26px 0 / 1px 100% no-repeat, repeating-linear-gradient(#aaa 0 1px, transparent 1px 2px) 45px 0 / 1px 100% no-repeat, repeating-linear-gradient(90deg, #aaa 0 1px, transparent 1px 2px) 45px 8px / 13px 1px no-repeat; }
.tree b { background: #dcdcdc; padding: 0 2px; }
.l2 { text-indent: 2px; } .l2 b { text-indent: 0; }
.hbar { display: flex; align-items: center; height: 15px; padding: 0 19px 0 5px; background: #f0f0f0; }
.hbar i { height: 14px; width: 148px; background: #cdcdcd; margin: 0 auto 0 6px; }

.view { flex: 1; min-width: 0; display: flex; flex-direction: column; margin-left: 6px; border-left: 1px solid #555; }
.canvasrow { flex: 1; display: flex; }
.canvas { flex: 1; min-width: 0; background: #fff; display: flex; flex-direction: column; align-items: flex-end; position: relative; padding: 8px 2px; gap: 8px; overflow: hidden; }
.drawing { position: absolute; inset: 0; width: 100%; height: 100%; }
.mdi { display: flex; gap: 6px; padding-right: 2px; }
.navbar { display: flex; flex-direction: column; align-items: center; width: 33px; height: 110px; padding: 3px; border: 2px solid #bbb; border-radius: 5px; background: #f4f4f4; gap: 5px; }
.navbar > :first-child, .navbar .end { align-self: flex-end; }
.navbar .end { margin-top: auto; }
.navbar .car { color: #999; }
.navbar hr { width: 100%; margin: 0; border: 0; border-top: 1px solid #bbb; }
.vbar.tall { width: 11px; }
.tall i { width: 11px; height: 16px; margin-top: 217px; }
.viewbar { display: flex; align-items: center; gap: 4px; height: 18px; padding: 0 18px 0 24px; background: #eee; }
.scale { width: 46px; }
.viewbar i { width: 15px; height: 14px; background: #cdcdcd; margin-left: auto; margin-right: 368px; }

.status { display: flex; align-items: center; height: 23px; border-top: 2px solid #888; background: linear-gradient(#e8e8e8, #c6c6c6); }
.status .i16 { stroke: #999; }
.status .dark { stroke: #444; margin-right: -7px; }
.ready { width: 398px; }
.status select { height: 20px; border: 0; background-color: #fff; background-image: url("data:image/svg+xml,%3Csvg xmlns='http://www.w3.org/2000/svg' width='8' height='6'%3E%3Cpath d='M1 1l3 3.500L7 1' fill='none' stroke='%23aaa' stroke-width='1.600'/%3E%3C/svg%3E"); color: #777; }
.wset { width: 191px; margin-left: 7px; }
.cnt { display: flex; align-items: center; gap: 3px; width: 48px; margin-left: 8px; }
.sq { margin: 0 8px 0 2px; }
.model { width: 145px; margin-left: 7px; }
.sel { display: flex; align-items: center; gap: 8px; margin: 0 57px 0 auto; }

.taskbar { display: flex; height: 37px; background: linear-gradient(90deg, #bf4f28 0, #bb4a2b 400px, #b73d29 900px); color: #fff; border-top: 1px solid #8b3525; }
.taskbar button { display: flex; align-items: center; white-space: nowrap; }
.start { width: 47px; padding-left: 9px; }
.task { width: 148px; margin-right: 4px; padding-left: 8px; gap: 5px; background: linear-gradient(90deg, #c7704f, #c4624f); border: 1px solid #d98b70; }
.pin { width: 58px; padding-left: 12px; }
.pin svg { background: linear-gradient(135deg, #2d62ad, #a9c9ec); }
.taskbar .now { background: #cb8072; border-color: #f0b8a4; gap: 3px; }
.rv { background: linear-gradient(#b9d3ee, #f2f5f8); }
.tray { margin-left: auto; display: flex; align-items: center; gap: 8px; padding-right: 9px; }
.lang { padding-left: 5px; }
.tray time { text-align: center; line-height: 15px; padding-left: 5px; }

.dialog { position: absolute; left: 348px; top: 53px; width: 423px; padding: 0 7px; background: #e88c68; border: 1px solid #c87a58; border-bottom-width: 8px; border-bottom-color: #e88c68; display: grid; grid-template-columns: 1fr auto; font-family: Roboto, "Open Sans", sans-serif; }
.dtitle { grid-area: 1 / 1 / 2 / 3; text-align: center; font: 13px/29px "Open Sans", sans-serif; color: #4a2a20; }
.dclose { grid-area: 1 / 2; align-self: start; width: 29px; height: 19px; display: grid; place-items: center; background: #c64b4b; color: #fff; margin-right: -2px; }
.dbody { grid-column: 1 / 3; background: #efefef; padding: 11px 10px 12px 19px; position: relative; }
.dbody button { height: 21px; background: linear-gradient(#f2f2f2, #e6e6e6); border: 1px solid #acacac; line-height: 18px; }
.form { display: flex; justify-content: space-between; }
.fields { display: grid; grid-template-columns: 65px 201px; grid-auto-rows: 20px; row-gap: 10px; align-content: start; line-height: 19px; }
.side { display: flex; flex-direction: column; gap: 8px; width: 100px; }
.dialog h3 { margin-top: 5px; line-height: 17px; }
.params { display: flex; height: 351px; margin: 4px 2px 0 1px; border-top: 1px solid #666; border-left: 1px solid #666; border-bottom: 1px solid #ddd; background: #fff; overflow: hidden; font-family: "Open Sans", sans-serif; }
.params table { flex: 1; border-collapse: collapse; table-layout: fixed; height: 0; }
.params th { height: 19px; background: #f0f0f0; font-weight: normal; line-height: 17px; border-right: 1px solid #333; border-bottom: 1px solid #333; }
.params td { height: 17px; padding: 0 2px; line-height: 16px; border-bottom: 1px dotted #888; border-right: 1px dotted #888; }
.params th:first-child { width: 170px; padding: 0; }
.params tbody::before { content: ""; display: block; height: 3px; }
.params .grp td { background: #9bb0d2; border: 0; font-weight: bold; color: #222; }
.grp svg { float: right; margin: 3px 3px 0; }
.params .cur td + td { border: 1px solid #222; }
.params .vbar { margin-left: 2px; }
.params .vbar i { height: 303px; margin-top: 3px; }
.actions { display: flex; gap: 8px; margin: 25px 0 0; padding-left: 1px; }
.actions button { width: 83px; }
.actions .ok { margin-left: 22px; }
.dbody button:disabled { color: #999; border-color: #ddd; background: #efefef; }
.grip { position: absolute; right: 1px; bottom: 1px; }

.name { left: 415px; top: 273px; width: 291px; padding: 0 6px; opacity: .86; }
.name .dclose { height: 18px; margin-right: 0; }
.name .dtitle { line-height: 26px; }
.name .dbody { padding: 14px 8px 4px; }
.nrow { display: flex; align-items: center; padding-bottom: 20px; border-bottom: 1px solid #aaa; }
.nrow label { width: 48px; }
.nrow input { width: 167px; height: 21px; padding: 0 4px; border: 1px solid #4b8bd8; background: #fff; }
.nact { display: flex; justify-content: flex-end; gap: 8px; padding-top: 9px; }
.nact button { width: 82px; }
.dbody .def { border-color: #3d88dc; }
.pointer { position: absolute; left: 677px; top: 132px; }
```
